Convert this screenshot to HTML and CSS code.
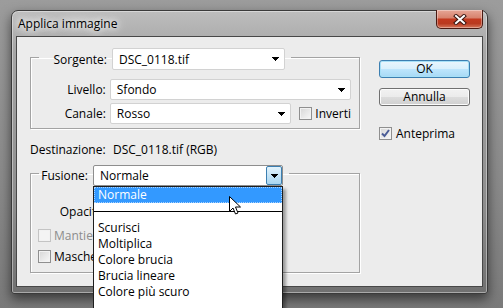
FILE: index.html
```html
<!DOCTYPE html>
<html lang="it">
<head>
  <meta charset="UTF-8" />
  <title>Applica immagine</title>
  <link rel="stylesheet" href="styles.css">
</head>
<body>
  <div class="window">
    <div class="titlebar">
      <span class="title">Applica immagine</span>
      <div class="closeButton">
        <svg width="14" height="11" viewBox="0 0 14 11">
          <path d="M3 2l8 7M11 2l-8 7" stroke="#3a1610" stroke-width="4" stroke-linecap="square"/>
          <path d="M3 2l8 7M11 2l-8 7" stroke="#fff" stroke-width="2" stroke-linecap="square"/>
        </svg>
      </div>
    </div>

    <div class="client">
      <div class="main">
        <fieldset class="group source">
          <legend>
            <div class="legendRow">
              <span class="legendLabel sourceLabel">Sorgente:</span>
              <div class="combo sourceCombo">
                <span>DSC_0118.tif</span>
                <svg class="arrow" width="7" height="4"><path d="M0 0h7v1h-1v1h-1v1h-1v1h-1v-1h-1v-1h-1v-1h-1z"/></svg>
              </div>
            </div>
          </legend>
          <div class="row">
            <span class="rowLabel">Livello:</span>
            <div class="combo layerCombo">
              <span>Sfondo</span>
              <svg class="arrow" width="7" height="4"><path d="M0 0h7v1h-1v1h-1v1h-1v1h-1v-1h-1v-1h-1v-1h-1z"/></svg>
            </div>
          </div>
          <div class="row">
            <span class="rowLabel">Canale:</span>
            <div class="combo channelCombo">
              <span>Rosso</span>
              <svg class="arrow" width="7" height="4"><path d="M0 0h7v1h-1v1h-1v1h-1v1h-1v-1h-1v-1h-1v-1h-1z"/></svg>
            </div>
            <span class="check invertCheck"></span>
            <span class="checkText">Inverti</span>
          </div>
        </fieldset>

        <div class="dest">
          <span class="destLabel">Destinazione:</span>
          <span>DSC_0118.tif (RGB)</span>
        </div>

        <fieldset class="group blend">
          <legend>
            <div class="legendRow">
              <span class="legendLabel blendLabel">Fusione:</span>
              <div class="combo blendCombo">
                <span>Normale</span>
                <span class="dropButton">
                  <svg class="arrow" width="7" height="4"><path d="M0 0h7v1h-1v1h-1v1h-1v1h-1v-1h-1v-1h-1v-1h-1z"/></svg>
                </span>
                <ul class="list">
                  <li class="selected">Normale</li>
                  <li class="separator"></li>
                  <li>Scurisci</li>
                  <li>Moltiplica</li>
                  <li>Colore brucia</li>
                  <li>Brucia lineare</li>
                  <li>Colore più scuro</li>
                  <li class="spacer"></li>
                </ul>
                <svg class="cursor" width="13" height="20" viewBox="0 0 13 20">
                  <path d="M0.5 0.5v15l3.5-3.5 2.5 6 2.5-1-2.5-6h5z" fill="#fff" stroke="#000" stroke-width="1"/>
                </svg>
              </div>
            </div>
          </legend>
          <div class="row opacityRow">
            <span class="rowLabel">Opacità:</span>
            <span class="field">100</span>
            <span>%</span>
          </div>
          <div class="checkRow disabled">
            <span class="check"></span>
            <span class="checkText">Mantieni trasparenza</span>
          </div>
          <div class="checkRow maskRow">
            <span class="check"></span>
            <span class="checkText">Maschera</span>
          </div>
        </fieldset>
      </div>

      <div class="side">
        <button class="btn defaultBtn">OK</button>
        <button class="btn">Annulla</button>
        <div class="checkRow previewRow">
          <span class="check checked">
            <svg width="11" height="11" viewBox="0 0 11 11"><path d="M2 5.5l2.5 2.5 4.5-6" fill="none" stroke="#4a5c96" stroke-width="2"/></svg>
          </span>
          <span class="checkText">Anteprima</span>
        </div>
      </div>
    </div>
  </div>
</body>
</html>
```

FILE: styles.css
```css
body {
  margin: 0;
  width: 503px;
  height: 308px;
  overflow: hidden;
  background: linear-gradient(#9c9c9c, #8a8a8a 60%, #7a7a7a);
  font-family: "Open Sans", "Noto Sans", sans-serif;
  font-size: 12px;
  color: #000;
}

.window {
  margin: 10px 0 0 11px;
  width: 477px;
  height: 284px;
  box-sizing: border-box;
  border: 1px solid #3a3a3a;
  border-radius: 7px 7px 3px 3px;
  padding: 0 4px 6px;
  display: flex;
  flex-direction: column;
  background: linear-gradient(#bdbdbd, #a6a6a6 40px, #8c8c8c 70%, #707070);
  box-shadow: 0 5px 12px rgba(0, 0, 0, 0.55), inset 0 0 0 1px rgba(255, 255, 255, 0.4);
}

.titlebar {
  height: 25px;
  display: flex;
  align-items: center;
  justify-content: space-between;
}
.title {
  padding-left: 2px;
  font-size: 12px;
  text-shadow: 0 0 6px #fff, 0 0 10px #fff, 0 0 14px #eee;
}
.closeButton {
  align-self: flex-start;
  margin-top: -1px;
  width: 47px;
  height: 19px;
  box-sizing: border-box;
  border: 1px solid #4a1a12;
  border-top: none;
  border-radius: 0 0 5px 5px;
  display: flex;
  align-items: center;
  justify-content: center;
  background: linear-gradient(#e6a696, #d8846f 42%, #c2391f 52%, #b93a20 75%, #d4765a);
  box-shadow: inset 0 0 0 1px rgba(255, 255, 255, 0.35);
}

.client {
  flex: 1;
  display: flex;
  border: 1px solid #474747;
  background-color: #ececec;
  padding: 11px 0 0 13px;
}
.main {
  width: 330px;
}

/* group boxes */
.group {
  margin: 0;
  min-width: 0;
  border: 1px solid #a3a3a3;
  box-shadow: 1px 1px 0 #fff, inset 1px 1px 0 #fff;
}
.group legend {
  padding: 0 6px 0 2px;
}
.legendRow {
  display: flex;
  align-items: center;
}
.legendRow .combo {
  margin-bottom: -4px;
}
.legendLabel {
  text-align: right;
  white-space: nowrap;
  margin-right: 5px;
  margin-bottom: -4px;
}
.sourceLabel {
  width: 66px;
}
.blendLabel {
  width: 47px;
}
.source {
  padding: 13px 8px 4px;
}
.blend {
  margin-top: 8px;
  padding: 19px 8px 8px;
}

.row {
  display: flex;
  align-items: center;
  height: 21px;
}
.row + .row {
  margin-top: 3px;
}
.rowLabel {
  width: 67px;
  text-align: right;
  white-space: nowrap;
  margin-right: 4px;
}

/* combo boxes */
.combo {
  height: 21px;
  box-sizing: border-box;
  border: 1px solid #d2d2d2;
  border-radius: 2px;
  background-color: #fff;
  display: flex;
  align-items: center;
  justify-content: space-between;
  padding: 0 5px 0 6px;
}
.sourceCombo {
  width: 173px;
  height: 22px;
}
.layerCombo {
  width: 242px;
}
.channelCombo {
  width: 182px;
}
.blendCombo {
  position: relative;
  width: 190px;
  border-color: #8e8e8e;
  padding: 0 0 0 6px;
}
.dropButton {
  width: 16px;
  height: 19px;
  box-sizing: border-box;
  border: 1px solid #3c7fb1;
  border-radius: 2px;
  background: linear-gradient(#e3f3fc, #c6e4f6 50%, #a9d6f1);
  display: flex;
  align-items: center;
  justify-content: center;
}

/* open list of the blend combo, drawn over the rows below */
.list {
  position: absolute;
  left: -1px;
  top: 20px;
  width: 190px;
  margin: 0;
  padding: 0;
  list-style: none;
  box-sizing: border-box;
  border: 1px solid #1e1e1e;
  border-bottom: none;
  background-color: #fff;
  box-shadow: 3px 3px 3px rgba(0, 0, 0, 0.35);
}
.list li {
  height: 16px;
  line-height: 16px;
  padding-left: 4px;
  white-space: nowrap;
}
.list .selected {
  background-color: #3399ff;
  color: white;
  outline: 1px dotted #a8d2ff;
  outline-offset: -1px;
}
.list .separator {
  height: 17px;
  padding: 0;
  position: relative;
}
.list .separator::after {
  content: "";
  position: absolute;
  left: 0;
  right: 0;
  top: 8px;
  height: 1px;
  background-color: #000;
}
.list .spacer {
  height: 20px;
}
.cursor {
  position: absolute;
  left: 135px;
  top: 30px;
}

/* destination */
.dest {
  display: flex;
  align-items: center;
  height: 16px;
  margin-top: 12px;
}
.destLabel {
  width: 83px;
}

.opacityRow {
  height: 20px;
}
.field {
  width: 40px;
  height: 18px;
  box-sizing: border-box;
  margin-right: 4px;
  padding-left: 4px;
  border: 1px solid #d2d2d2;
  background-color: #fff;
}

/* checkboxes */
.check {
  flex-shrink: 0;
  width: 13px;
  height: 13px;
  box-sizing: border-box;
  border: 1px solid #8f8f8f;
  background: linear-gradient(135deg, #d6d6d6, #f8f8f8);
  box-shadow: inset 0 0 0 1px #f2f2f2;
  display: flex;
  align-items: center;
  justify-content: center;
}
.checkText {
  margin-left: 3px;
  white-space: nowrap;
}
.invertCheck {
  margin-left: 8px;
}
.checkRow {
  display: flex;
  align-items: center;
  height: 15px;
  margin-left: -1px;
}
.disabled {
  margin-top: 7px;
  color: #8d8d8d;
}
.disabled .check {
  border-color: #c4c4c4;
  background: #f4f4f4;
}
.maskRow {
  margin-top: 6px;
}

/* right column */
.side {
  margin-left: 19px;
  padding-top: 12px;
  width: 91px;
  display: flex;
  flex-direction: column;
}
.btn {
  height: 18px;
  padding: 0;
  font-family: inherit;
  font-size: 12px;
  font-weight: normal;
  line-height: 14px;
  color: #000;
  border: 1px solid #707070;
  border-radius: 3px;
  background: linear-gradient(#f2f2f2, #ebebeb 50%, #dddddd 50%, #cfcfcf);
  box-shadow: inset 0 0 0 1px #fcfcfc;
}
.btn + .btn {
  margin-top: 10px;
}
.defaultBtn {
  border-color: #3c7fb1;
  background: linear-gradient(#eaf6fd, #d9f0fc 50%, #bee6fd 50%, #a7d9f5);
  box-shadow: inset 0 0 0 1px #a7e0f7;
}
.previewRow {
  margin-top: 20px;
  margin-left: 0;
}
.previewRow .checkText {
  margin-left: 4px;
}
```
